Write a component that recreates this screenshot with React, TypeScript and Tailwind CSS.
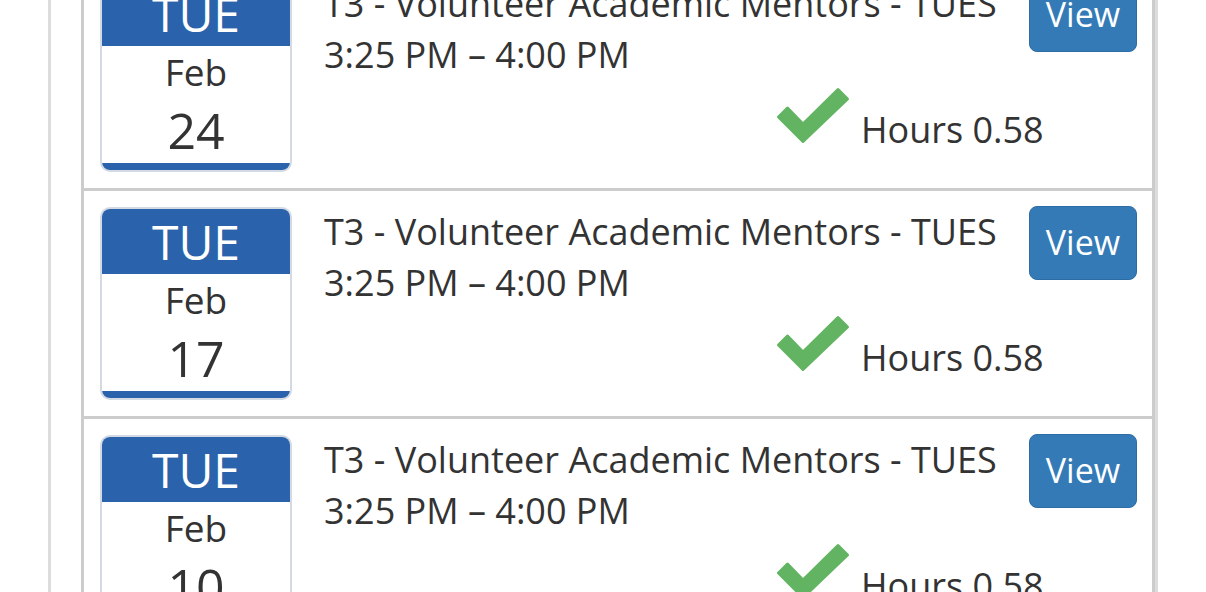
import React from "react";

const rows = [
  { dow: "TUE", mon: "Feb", day: "24" },
  { dow: "TUE", mon: "Feb", day: "17" },
  { dow: "TUE", mon: "Feb", day: "10" },
];

function Check() {
  return (
    <svg width="72" height="56" viewBox="0 0 72 56" className="shrink-0 overflow-visible">
      <polygon
        points="1.5,28 26,52.5 70.5,10 61,0.5 26,35 10.5,19"
        fill="#62b462"
        stroke="#62b462"
        strokeWidth="3"
        strokeLinejoin="round"
      />
    </svg>
  );
}

function Row({ dow, mon, day }: { dow: string; mon: string; day: string }) {
  return (
    <div className="flex border-t-[3px] border-[#cccccc] pt-4 pb-4 pl-4 pr-[15px]">
      <div className="w-[192px] h-[193px] shrink-0 rounded-[10px] border-2 border-[#d3dae3] overflow-hidden flex flex-col bg-white">
        <div className="h-[65px] bg-[#2a63ab] text-white text-[48px] leading-none flex items-center justify-center">
          {dow}
        </div>
        <div className="h-[54px] pb-[4px] text-[37px] leading-none text-[#333333] flex items-center justify-center">
          {mon}
        </div>
        <div className="h-[63px] pb-[4px] text-[50px] leading-none text-[#333333] flex items-center justify-center">
          {day}
        </div>
        <div className="h-[7px] bg-[#2a63ab]" />
      </div>
      <div className="ml-8 flex-1 flex flex-col">
        <div className="flex">
          <div className="flex-1 -mt-[1px] text-[36px] leading-[51px] text-[#333333]">
            <div className="whitespace-nowrap">T3 - Volunteer Academic Mentors - TUES</div>
            <div className="whitespace-nowrap">3:25 PM – 4:00 PM</div>
          </div>
          <div className="w-[108px] h-[74px] -mt-px rounded-[8px] bg-[#337ab7] border border-[#2e6da4] text-white text-[34px] flex items-center justify-center pb-[1px]">
            View
          </div>
        </div>
        <div className="flex items-end h-[75px] pl-[453px]">
          <div className="self-start mt-[9px]">
            <Check />
          </div>
          <span className="ml-[12px] text-[36px] leading-[51px] text-[#333333] whitespace-nowrap">
            Hours 0.58
          </span>
        </div>
      </div>
    </div>
  );
}

export default function App() {
  return (
    <div
      className="w-[1206px] h-[592px] overflow-hidden bg-white"
      style={{ fontFamily: "'Open Sans', 'Noto Sans', sans-serif" }}
    >
      <div className="ml-[48px] w-[1110px] h-[700px] border-l-[3px] border-r-[3px] border-[#dcdcdc] pl-[30px]">
        <div className="-mt-[40px] border-l-[3px] border-r-[3px] border-[#cccccc]">
          {rows.map((r, i) => (
            <Row key={i} {...r} />
          ))}
        </div>
      </div>
    </div>
  );
}
